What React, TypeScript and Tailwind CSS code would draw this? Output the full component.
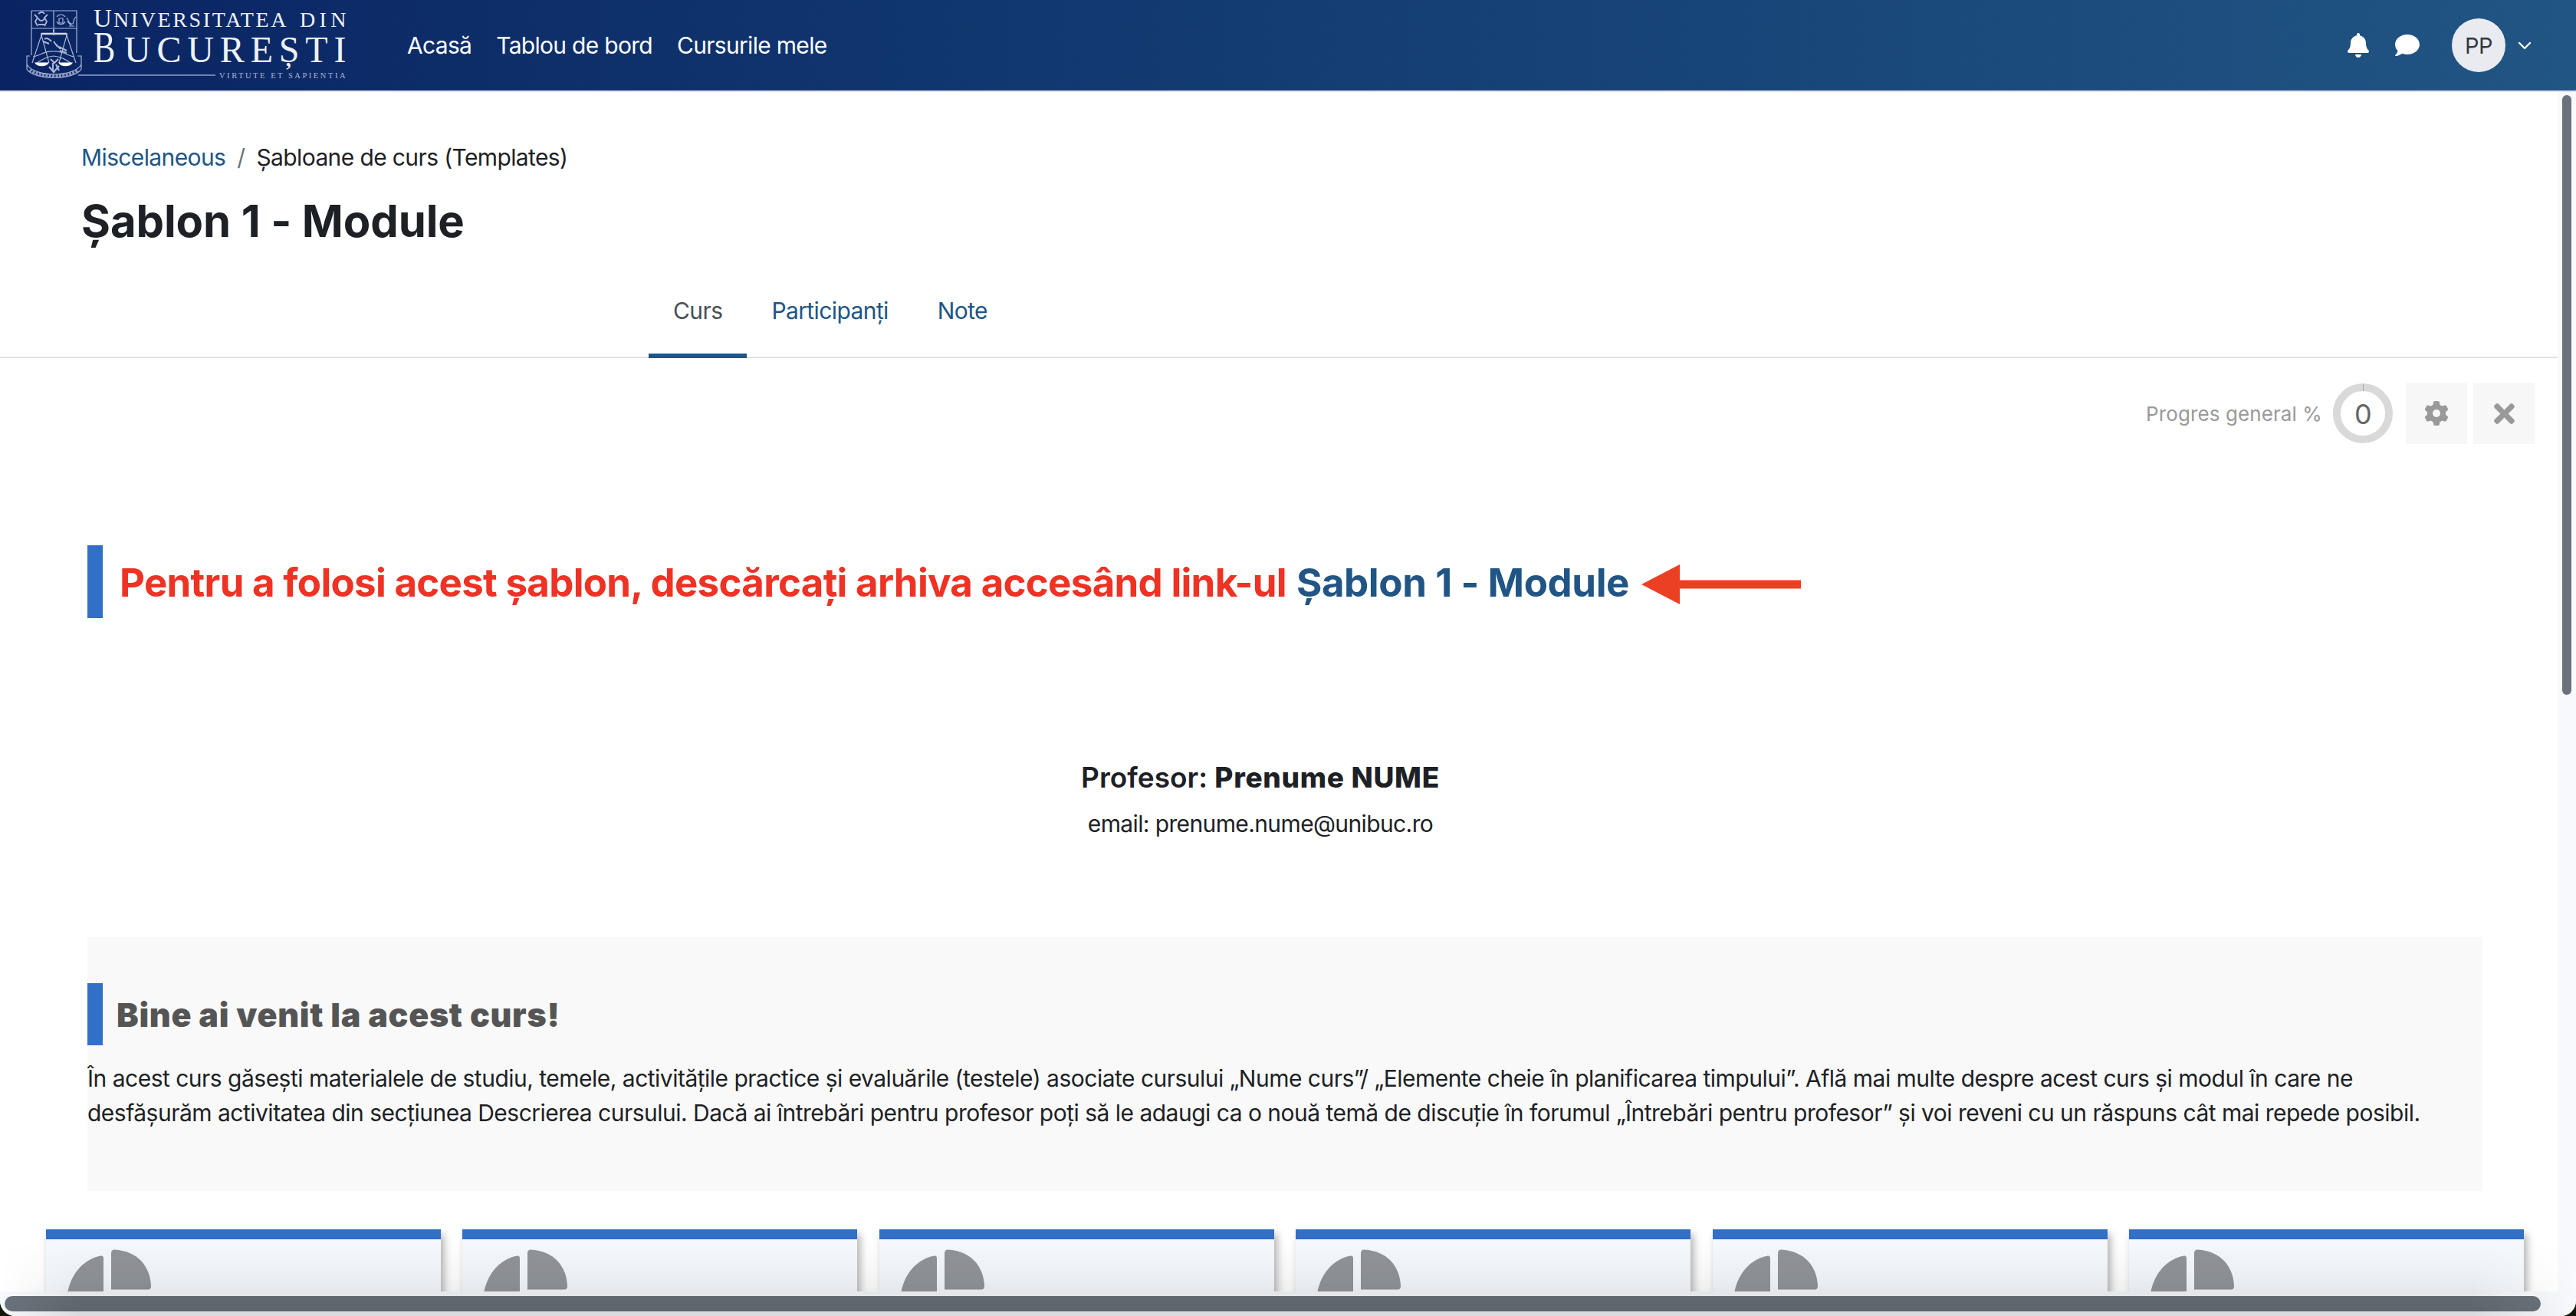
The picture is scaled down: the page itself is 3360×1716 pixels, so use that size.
import { FaBell, FaComment, FaTimes } from 'react-icons/fa';
import { FaGear } from 'react-icons/fa6';

const navLinks = ['Acasă', 'Tablou de bord', 'Cursurile mele'];

const tabs = [
  { label: 'Curs', active: true },
  { label: 'Participanți', active: false },
  { label: 'Note', active: false },
];

const moduleCards = [1, 2, 3, 4, 5, 6];

function Crest() {
  return (
    <g fill="none" stroke="#a9b5d6" strokeWidth="1.2">
      {/* Shield */}
      <path d="M41 14h59v55M41 14v58M41 37h59M70 14v23" />
      <path d="M45 19l4 4-3 5 3 6M62 19l-4 4 3 5-3 6M50 18c4-3 6-3 8 0M50 24c2 4 6 4 8 0M50 32h8" strokeWidth="1.8" />
      <path d="M74 22c3-4 8-4 11 0M74 28c2 5 9 5 11 0M77 24h5v6h-5zM87 23c3 5 3 9 8 8 2-4 1-7 4-9M88 28l5 5M90 34h7" />
      {/* Scales */}
      <path d="M54 44h33" stroke="#d5dbec" strokeWidth="2.5" />
      <path d="M54 43v5M87 43v5M70 38v8" strokeWidth="2" />
      <path d="M54 46L42 82M54 46l10 36M87 46L77 82M87 46l12 36" />
      <path d="M58 51c4-3 7 1 9 3M56 54l8 3M70 54l5 7M72 57l7 7M77 61l10 5M78 66l9 3" strokeWidth="2" />
      <path d="M43 74c8-1 15-8 27-7 12-1 18 6 27 7M48 82c7-4 11-8 22-9 10 1 16 5 22 9" />
      <path d="M46 82h17c-3 5-14 5-17 0zM77 82h17c-3 5-14 5-17 0z" fill="#fff" stroke="#fff" />
      <path d="M66 77l5 5 5-5M64 87l6 7 7-8M69 82v10M73 84l4 8" strokeWidth="2.2" />
      {/* Ribbon */}
      <path d="M39 73h-4v17c8 15 63 15 71 0V73h-5M35 84c10 17 62 17 71 0" />
      <path d="M39 91c12 11 51 11 63 0" stroke="#8795c0" strokeWidth="4.5" strokeDasharray="3 1.4" />
    </g>
  );
}

function Logo() {
  return (
    <svg width="460" height="118" viewBox="0 0 460 118" className="shrink-0 font-['Liberation_Serif',serif]">
      <Crest />
      <g fill="#eef1f8">
        <text x="122" y="35" fontSize="33">U</text>
        <text x="148" y="35" fontSize="28" textLength="225" lengthAdjust="spacing">NIVERSITATEA</text>
        <text x="391" y="35" fontSize="28" textLength="60" lengthAdjust="spacing">DIN</text>
        <text x="122" y="81" fontSize="56" textLength="28" lengthAdjust="spacingAndGlyphs">B</text>
        <text x="162" y="81" fontSize="48" textLength="289" lengthAdjust="spacing">UCUREȘTI</text>
      </g>
      <rect x="102" y="97" width="179" height="2" fill="#6f81b3" />
      <text x="286" y="102" fontSize="10.5" fill="#a9b5d6" textLength="164" lengthAdjust="spacing">
        VIRTUTE ET SAPIENTIA
      </text>
    </svg>
  );
}

function Header() {
  return (
    <header className="flex h-[120px] shrink-0 items-center border-b-2 border-[#e2e1ec] bg-linear-to-r from-[#0a2463] to-[#215583] text-white">
      <Logo />
      <nav className="ml-[71px] flex gap-8 tracking-[-0.7px]">
        {navLinks.map((link) => (
          <a key={link} href="#">{link}</a>
        ))}
      </nav>
      <div className="mr-[58px] ml-auto flex items-center">
        <FaBell size={32} />
        <FaComment size={32} className="ml-8" />
        <div className="ml-[42px] flex size-[70px] items-center justify-center rounded-full bg-[#e9ebf0] text-[29px] text-[#343a40]">
          PP
        </div>
        <svg width="18" height="12" viewBox="0 0 18 12" className="ml-4 mt-0.5" fill="none" stroke="currentColor" strokeWidth="2.4">
          <path d="M2 2l7 7 7-7" strokeLinecap="round" strokeLinejoin="round" />
        </svg>
      </div>
    </header>
  );
}

function CourseHeading() {
  return (
    <div className="shrink-0 pt-[63px]">
      <div className="ml-[106px] flex h-[45px] items-center tracking-[-0.62px]">
        <a href="#" className="text-[#205585]">Miscelaneous</a>
        <span className="mx-[15px] text-[#6a737b]">/</span>
        <span>Șabloane de curs (Templates)</span>
      </div>
      <h1 className="mt-6 ml-[106px] text-[58px] leading-[72px] font-bold tracking-[-0.1px]">Șablon 1 - Module</h1>
      <div className="mt-[19px] flex h-[124px] border-b-2 border-[#dee2e6] pl-[846px] tracking-[-0.6px]">
        {tabs.map((tab) => (
          <a
            key={tab.label}
            href="#"
            className={
              tab.active
                ? 'flex h-[124px] items-center border-y-[6px] border-t-transparent border-b-[#205585] px-8 text-[#495057]'
                : 'flex h-[124px] items-center border-y-[6px] border-transparent px-8 text-[#205585]'
            }
          >
            {tab.label}
          </a>
        ))}
      </div>
    </div>
  );
}

function ProgressBar() {
  return (
    <div className="mt-8 mr-[30px] flex h-20 shrink-0 items-center justify-end text-[#999]">
      <span className="text-[26px] tracking-[0.1px]">Progres general %</span>
      <div className="ml-[14px] flex size-[78px] items-start justify-center rounded-full border-10 border-[#d9d9d9]">
        <span className="-mt-2.5 h-2.5 w-px bg-[#aaa]" />
        <span className="-ml-px w-0 text-[36px] leading-[60px] tracking-normal text-[#666]">
          <span className="-ml-[11px]">0</span>
        </span>
      </div>
      <button className="ml-[17px] flex size-20 items-center justify-center bg-[#f7f7f7]">
        <FaGear size={32} />
      </button>
      <button className="ml-2 flex size-20 items-center justify-center bg-[#f7f7f7]">
        <FaTimes size={39} />
      </button>
    </div>
  );
}

function ArrowPointer() {
  return (
    <svg width="208" height="52" viewBox="0 0 208 52" className="ml-4" fill="#ec4025">
      <path d="M0 26L50 0v20.500h158v11H50V52z" />
    </svg>
  );
}

function PieIcon() {
  return (
    <svg width="112" height="70" viewBox="0 0 112 70" className="ml-[27px] mt-[13px] shrink-0" fill="#919499">
      <path d="M48 12.500v60H0C-1 40 18 13 45 8.500q3-.4 3 4z" />
      <path d="M58 5q0-4.500 4.500-4.500C92 2 109 22 110 48q0 4.500-4 4.500H58z" />
    </svg>
  );
}

export default function App() {
  return (
    <div className="h-[1716px] w-[3360px] overflow-hidden bg-[#14180a] font-['Inter','Noto_Sans',sans-serif] text-[30px] leading-[45px] tracking-[-0.5px] whitespace-nowrap text-[#1d2125]">
      <div className="relative flex h-full flex-col overflow-hidden rounded-b-[20px] bg-white">
        <Header />

        <div className="flex min-h-0 flex-1">
          <main className="flex w-[3336px] flex-col overflow-hidden">
            <CourseHeading />
            <ProgressBar />

            {/* Download notice */}
            <div className="mt-[132px] ml-[114px] flex h-[95px] shrink-0 items-center border-l-20 border-[#326fc6] pl-[22px] text-[51px] font-bold">
              <h2 className="pt-0.5 tracking-[-0.71px] text-[#ee3224]">
                Pentru a folosi acest șablon, descărcați arhiva accesând link-ul
              </h2>
              <a href="#" className="ml-[13px] pt-0.5 tracking-[-0.4px] text-[#205585]">Șablon 1 - Module</a>
              <div className="pt-1.5">
                <ArrowPointer />
              </div>
            </div>

            {/* Teacher */}
            <div className="mt-[186px] mr-[48px] shrink-0 text-center">
              <h3 className="text-[37px] leading-[44px] font-semibold tracking-[0px]">
                Profesor: <strong className="font-extrabold tracking-[0.7px]">Prenume NUME</strong>
              </h3>
              <p className="mt-4 tracking-[-0.62px]">email: prenume.nume@unibuc.ro</p>
            </div>

            {/* Welcome box */}
            <section className="mt-[125px] ml-[114px] h-[331px] w-[3124px] shrink-0 bg-[#f9f9f9] pt-[60px]">
              <h3 className="flex h-[81px] items-center border-l-20 border-[#326fc6] pt-px pl-[18px] text-[43px] font-black tracking-[0.67px] text-[#555]">
                Bine ai venit la acest curs!
              </h3>
              <p className="mt-[21px] tracking-[-0.51px]">
                În acest curs găsești materialele de studiu, temele, activitățile practice și evaluările (testele) asociate cursului
                „Nume curs”/ „Elemente cheie în planificarea timpului”. Află mai multe despre acest curs și modul în care ne
                <br />
                desfășurăm activitatea din secțiunea Descrierea cursului. Dacă ai întrebări pentru profesor poți să le adaugi ca o
                nouă temă de discuție în forumul „Întrebări pentru profesor” și voi reveni cu un răspuns cât mai repede posibil.
              </p>
            </section>

            {/* Module cards, cut off by the bottom of the window */}
            <div className="mt-[50px] flex h-[300px] shrink-0 gap-[28.4px] pr-[44px] pl-[60px]">
              {moduleCards.map((card) => (
                <div
                  key={card}
                  className="flex flex-1 border-t-[13px] border-[#326fc6] bg-[#f5f8fd] shadow-[4px_6px_10px_rgba(0,0,0,0.3)]"
                >
                  <PieIcon />
                </div>
              ))}
            </div>
          </main>

          {/* Vertical scrollbar */}
          <div className="w-6 bg-[#f8f9fc] pt-1 pl-1.5">
            <div className="h-[782px] w-3 rounded-full bg-[#6a737b]" />
          </div>
        </div>

        {/* Horizontal scrollbar */}
        <div className="flex h-8 shrink-0 bg-[#f8f9fc] pt-1.5 pl-1.5">
          <div className="h-5 w-[3308px] rounded-full bg-[#6a737b]" />
        </div>

        <div className="pointer-events-none absolute inset-x-0 bottom-0 h-[100px] bg-linear-to-t from-black/12 via-black/4 to-transparent [mask-image:linear-gradient(to_right,transparent,black_3%,black_96%,transparent)]" />
      </div>
    </div>
  );
}
